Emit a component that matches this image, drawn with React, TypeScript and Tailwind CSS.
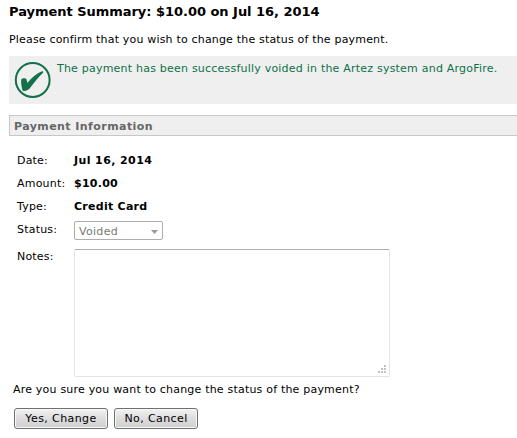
import React from "react";

function Row({ label, children }: { label: string; children: React.ReactNode }) {
  return (
    <div className="flex h-[23px] items-center">
      <span className="w-[57px] shrink-0">{label}</span>
      {children}
    </div>
  );
}

const button =
  "h-[21px] shrink-0 rounded-[3px] border border-[#707070] bg-linear-to-b from-[#f2f2f2] from-0% via-[#dddddd] via-50% to-[#cfcfcf] pt-px text-[11px] leading-[18px] tracking-[0.4px] text-black shadow-[inset_0_0_0_1px_#f8f8f8]";

export default function App() {
  return (
    <main className="h-[438px] w-[517px] overflow-hidden bg-white pl-[9px] font-['Verdana','DejaVu_Sans',sans-serif] text-[11px] leading-4 tracking-[0.2px] whitespace-nowrap text-black">
      <h1 className="pt-1 text-[13px] leading-4 font-bold tracking-[-0.03px]">
        <span>Payment Summary: $10.00 on Jul 16, 2014</span>
      </h1>
      <p className="mt-[12px] tracking-[0.18px]">Please confirm that you wish to change the status of the payment.</p>

      <div className="mt-[8px] flex h-12 bg-[#efefef] pl-[5px] text-[#0d7148]">
        <svg className="mt-[6px] h-9 w-[38px] shrink-0" viewBox="0 0 38 36" fill="none">
          <circle cx="18.7" cy="18" r="16.9" stroke="#117249" strokeWidth="2" />
          <path
            d="M7.2 17.5C8.5 16 11.5 15.6 12.4 17.2L13.4 20.9C17.5 15.8 22.5 11.2 28 9.2C29.3 8.9 29.5 10 28.8 11C24.6 15 20 20.8 16 26C14.5 28.2 10 30 8.7 28.4C7.6 25.8 6.8 20.5 7.2 17.5Z"
            fill="#117249"
          />
        </svg>
        <span className="mt-[5px] ml-[5px] tracking-[0.215px]">The payment has been successfully voided in the Artez system and ArgoFire.</span>
      </div>

      <h2 className="mt-[11px] h-[21px] border border-r-0 border-[#c7c7c7] bg-[#efefef] pl-[4px] leading-[21px] font-bold tracking-[0.43px] text-[#666]">
        <span>Payment Information</span>
      </h2>

      <section className="mt-[13px] pl-2">
        <Row label="Date:"><b className="tracking-[0.4px]">Jul 16, 2014</b></Row>
        <Row label="Amount:"><b className="tracking-[0.25px]">$10.00</b></Row>
        <Row label="Type:"><b className="tracking-[0.27px]">Credit Card</b></Row>
        <div className="flex h-[31px] items-start pt-[3px]">
          <span className="w-[57px] shrink-0 pt-px">Status:</span>
          <div className="flex h-[19px] w-[89px] items-center justify-between rounded-[2px] border border-[#adadad] pr-[4px] pl-[4px] text-[#777]">
            <span className="pt-[2px] tracking-[0.3px]">Voided</span>
            <svg className="mt-[3px] h-1 w-[7px]" viewBox="0 0 7 4" fill="#999"><path d="M0 0h7L3.5 4Z" /></svg>
          </div>
        </div>
        <div className="flex">
          <span className="w-[57px] shrink-0">Notes:</span>
          <div className="flex h-[128px] w-[316px] items-end justify-end rounded-[2px] border border-[#e2e3ea] border-t-[#abadb3] p-[2px]">
            <svg className="h-[9px] w-[9px]" viewBox="0 0 9 9" fill="#c2c2c2">
              <path d="M6 0h2v2H6zM3 3h2v2H3zM6 3h2v2H6zM0 6h2v2H0zM3 6h2v2H3zM6 6h2v2H6z" />
            </svg>
          </div>
        </div>
      </section>

      <p className="mt-[5px] pl-[4px]">Are you sure you want to change the status of the payment?</p>
      <div className="mt-[10px] flex gap-[6px] pl-[5px]">
        <button className={`${button} w-[94px]`}>Yes, Change</button>
        <button className={`${button} w-[84px]`}>No, Cancel</button>
      </div>
    </main>
  );
}
